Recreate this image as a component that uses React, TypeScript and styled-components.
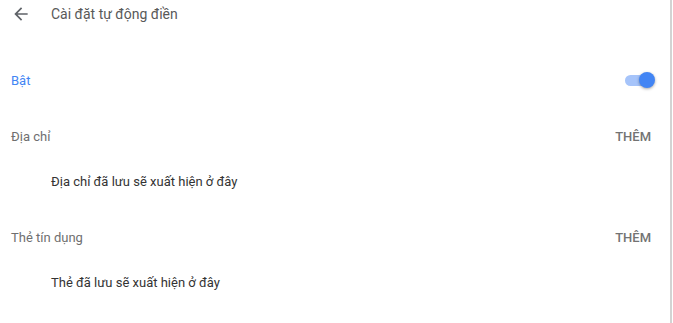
import styled, { createGlobalStyle } from "styled-components";

const GlobalStyle = createGlobalStyle`
  html, body {
    margin: 0;
    padding: 0;
    background: #fff;
  }
  body {
    font-family: Roboto, "Noto Sans", sans-serif;
    font-size: 13px;
  }
`;

const Panel = styled.div`
  width: 670px;
  height: 323px;
  border-right: 2px solid #d3d3d3;
  box-sizing: content-box;
  display: flex;
  flex-direction: column;
`;

const Header = styled.div`
  height: 28px;
  display: flex;
  align-items: center;
`;

const BackButton = styled.button`
  border: 0;
  background: none;
  padding: 0;
  margin-left: 11px;
  width: 20px;
  height: 20px;
  display: flex;
  color: #5f6368;
  cursor: pointer;
  svg {
    width: 20px;
    height: 20px;
  }
`;

const Title = styled.h1`
  margin: 0 0 0 20px;
  font-size: 14px;
  font-weight: 400;
  color: #595959;
`;

const ToggleRow = styled.div`
  margin-top: 32px;
  height: 40px;
  padding: 0 15px 0 11px;
  display: flex;
  align-items: center;
  justify-content: space-between;
`;

const ToggleLabel = styled.span`
  color: #4285f4;
`;

const Switch = styled.div`
  position: relative;
  width: 30px;
  height: 16px;
  display: flex;
  align-items: center;
`;

const Track = styled.div`
  width: 25px;
  height: 11px;
  border-radius: 6px;
  background: #a6c4fa;
`;

const Knob = styled.div`
  position: absolute;
  right: 0;
  top: 0;
  width: 16px;
  height: 16px;
  border-radius: 50%;
  background: #4285f4;
  box-shadow: 0 1px 3px rgba(0, 0, 0, 0.35);
`;

const Section = styled.section`
  padding-bottom: 11px;
  &:first-of-type {
    margin-top: 12px;
  }
`;

const SectionHeader = styled.div`
  height: 48px;
  padding: 0 19px 0 11px;
  display: flex;
  align-items: center;
  justify-content: space-between;
`;

const SectionTitle = styled.span`
  color: #6f6f6f;
`;

const AddButton = styled.button`
  border: 0;
  background: none;
  padding: 0;
  font: inherit;
  font-weight: 500;
  color: #737373;
  text-transform: uppercase;
  cursor: pointer;
`;

const EmptyItem = styled.div`
  height: 42px;
  padding-left: 51px;
  display: flex;
  align-items: center;
  color: #333;
`;

const sections = [
  { title: "Địa chỉ", empty: "Địa chỉ đã lưu sẽ xuất hiện ở đây" },
  { title: "Thẻ tín dụng", empty: "Thẻ đã lưu sẽ xuất hiện ở đây" },
];

export default function App() {
  return (
    <>
      <GlobalStyle />
      <Panel>
        <Header>
          <BackButton aria-label="Quay lại">
            <svg viewBox="0 0 24 24" fill="currentColor" aria-hidden="true">
              <path d="M20 11H7.83l5.59-5.59L12 4l-8 8 8 8 1.41-1.41L7.83 13H20v-2z" />
            </svg>
          </BackButton>
          <Title>Cài đặt tự động điền</Title>
        </Header>
        <ToggleRow>
          <ToggleLabel>Bật</ToggleLabel>
          <Switch>
            <Track />
            <Knob />
          </Switch>
        </ToggleRow>
        {sections.map((s) => (
          <Section key={s.title}>
            <SectionHeader>
              <SectionTitle>{s.title}</SectionTitle>
              <AddButton>Thêm</AddButton>
            </SectionHeader>
            <EmptyItem>{s.empty}</EmptyItem>
          </Section>
        ))}
      </Panel>
    </>
  );
}
